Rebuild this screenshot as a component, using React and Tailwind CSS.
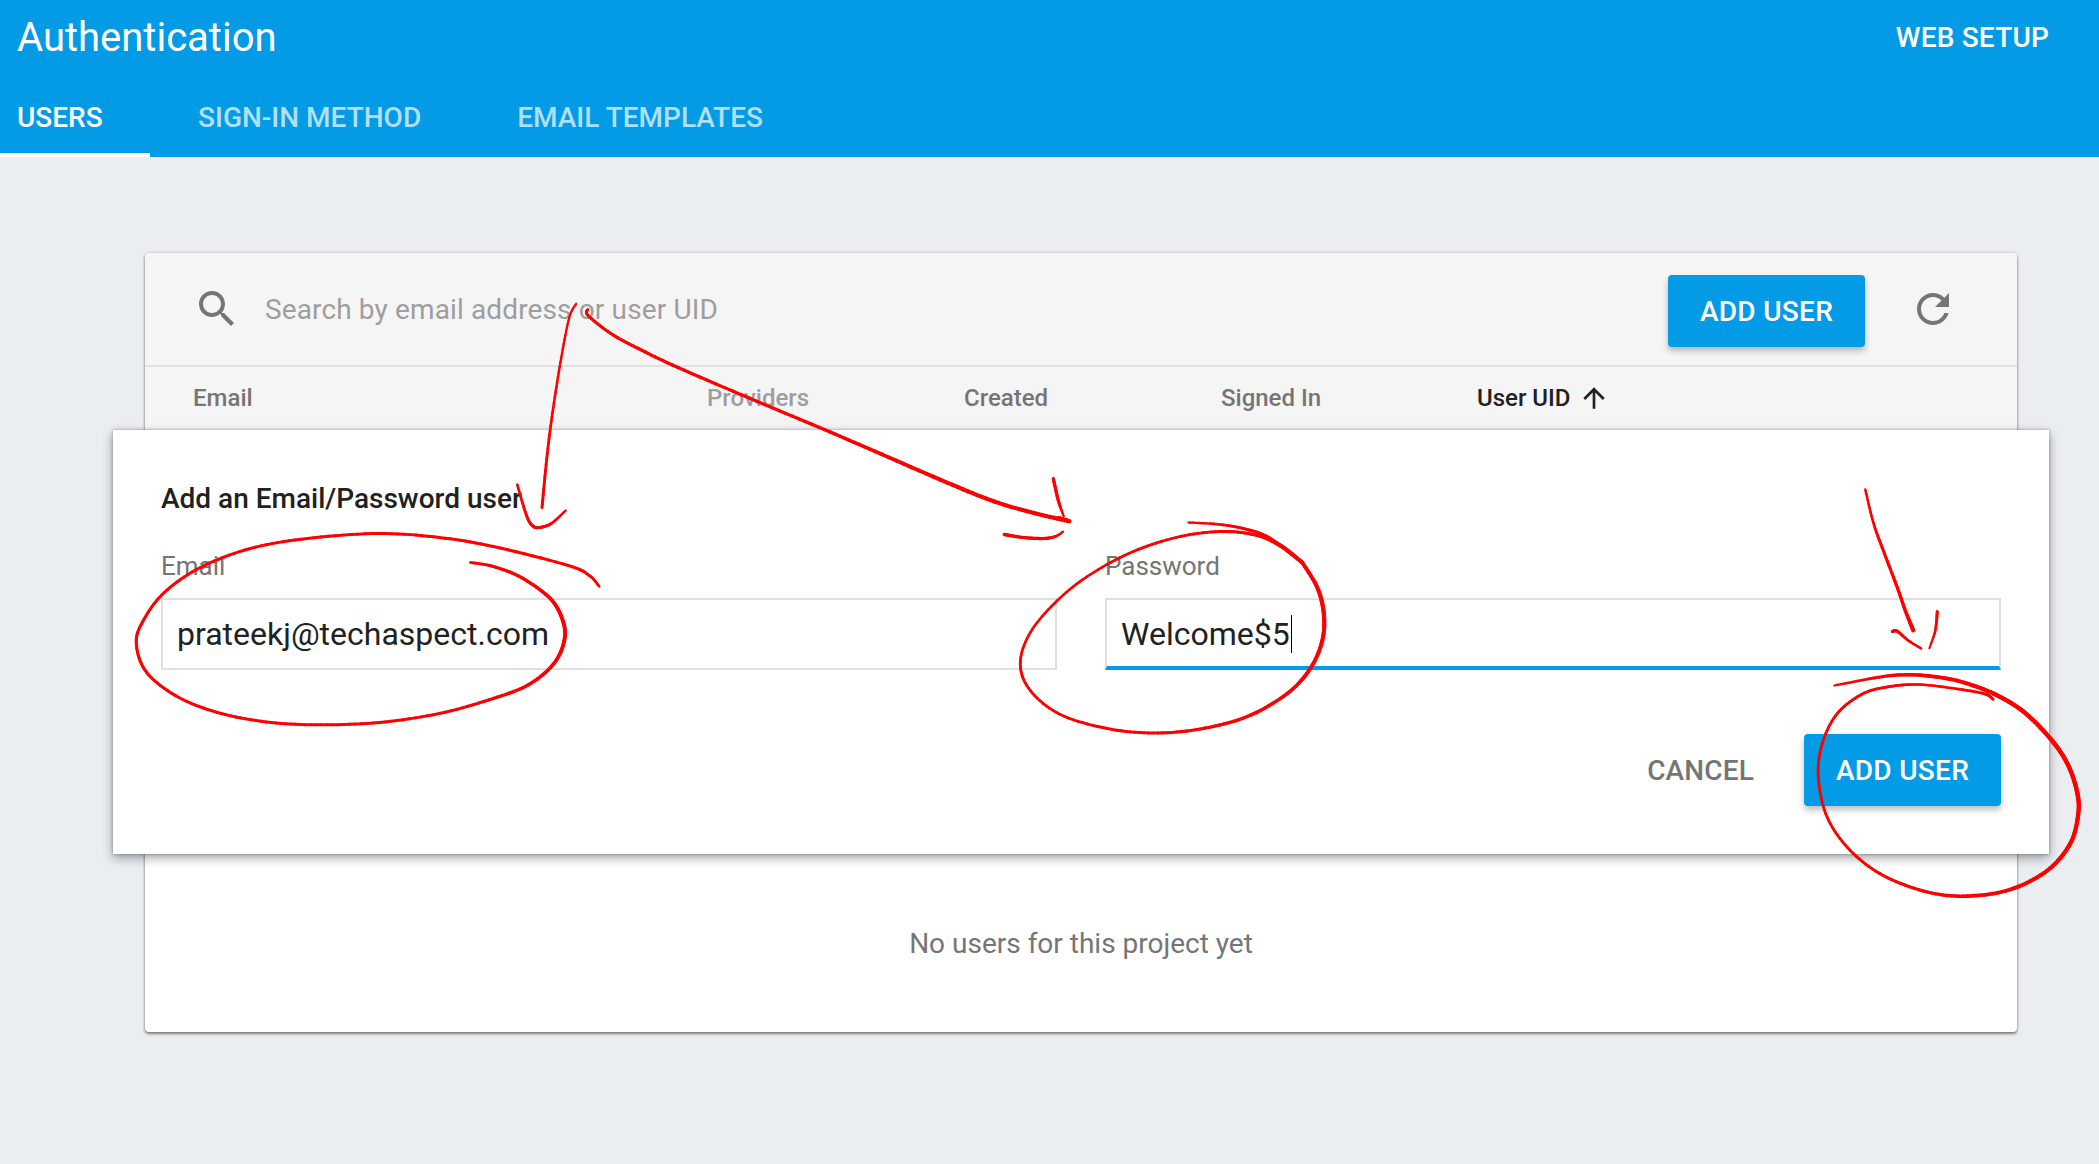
const COLUMNS = [
  { label: 'Email', className: 'w-[514px] text-[#757575]' },
  { label: 'Providers', className: 'w-[257px] text-[#9e9e9e]' },
  { label: 'Created', className: 'w-[257px] text-[#757575]' },
  { label: 'Signed In', className: 'w-[256px] text-[#757575]' },
];

// Pen strokes: each point is [x, y, pen width].
const STROKES = [
  [[576, 303, 2], [569, 317, 2.2], [561, 357, 2.4], [553, 407, 2.6], [547, 453, 2.8], [541.7, 507, 3]],
  [[517, 484, 2.4], [521.5, 500, 2.6], [527.4, 518, 2.8], [532.6, 525.5, 3], [539, 527, 3], [551, 523, 2.8], [565.4, 510, 2.2]],
  [[587.5, 309, 2.6], [587.8, 315, 3], [610.5, 333, 3], [638, 348, 3.2], [677.7, 367, 3.2], [757, 401, 3.2], [824, 429, 3.4], [875, 451, 3.6], [946.6, 482, 4], [994, 501, 4], [1033.6, 512.5, 4], [1069, 520.7, 4.2]],
  [[1053, 478, 3.2], [1058, 500, 3.2], [1063.5, 516, 2]],
  [[1058, 517, 3], [1069, 520.7, 4]],
  [[1004, 534, 3.4], [1023, 537, 3.2], [1043, 538, 3.2], [1055, 536, 2.6], [1063, 531, 2]],
  [[470, 562, 2.6], [493, 566, 3], [521, 577, 3.2], [550, 598, 3.6], [562.5, 620, 3.8], [564, 640, 3.8], [553.6, 663, 3.6], [528.6, 684, 3.4], [493, 698, 3.2], [439, 713, 3], [378.6, 722, 3], [321, 724.3, 3], [271, 722, 3], [221, 713, 3], [178.6, 697, 3], [146.4, 672, 3], [136, 643, 3], [143, 620, 3], [164, 592, 3], [200, 567, 3], [250, 548, 3], [307, 538, 3], [378.6, 533, 3], [439, 537, 3], [493, 546, 3], [568, 565, 3], [589, 575, 2.8], [599, 586, 2.4]],
  [[1188, 522, 2.2], [1220, 524, 2.6], [1247, 529, 3], [1270, 538, 3.2], [1302, 562, 3.4]],
  [[1302, 562, 3.6], [1317, 587, 4], [1323.5, 613, 4.2], [1322, 640, 4], [1310, 668, 3.8], [1287, 693, 3.6], [1247, 716, 3.4], [1200, 728.5, 3.2], [1153, 732.5, 3], [1107, 728, 3], [1060, 714, 2.8], [1030, 690, 2.8], [1020, 663, 2.8], [1030, 632, 2.6], [1057, 600, 2.6], [1090, 574, 2.6], [1133, 551, 2.8], [1180, 536, 2.8], [1223, 531, 3], [1257, 535, 3.2], [1280, 545, 4], [1302, 562, 3.8]],
  [[1865, 489, 2.4], [1873, 522, 2.6], [1883, 550, 3], [1897, 587, 3.2], [1905, 610, 3.4], [1913, 630, 4]],
  [[1892, 631, 3], [1897, 630.8, 3], [1908, 640, 2.6], [1921, 648, 2.2]],
  [[1937, 611, 3], [1935, 630, 2.6], [1929, 648, 1.8]],
  [[1834, 685, 2.2], [1883, 676, 3], [1910, 674.3, 3.4], [1933, 676, 3.6], [1960, 681, 3.8], [1993, 693, 4.2], [2023, 711, 4.4], [2050, 738, 4.4], [2067, 763, 4.4], [2076.5, 790, 4.4], [2078, 813, 4.2], [2070, 843, 4.2], [2047, 870, 4], [2010, 889, 3.8], [1967, 895.6, 3.6], [1927, 891.5, 3.2], [1883, 875, 3], [1850, 850, 2.8], [1827, 817, 2.8], [1818, 777, 2.8], [1822, 743, 2.8], [1837, 713, 2.8], [1863, 693, 2.8], [1890, 686, 2.8], [1917, 684, 2.6], [1947, 687, 2.6], [1983, 693, 2.8], [1993, 699, 2.6]],
];

// Splits a stroke into short Catmull-Rom pieces so the pen width can vary.
function smooth(points) {
  const out = [];
  const steps = 10;
  for (let i = 0; i < points.length - 1; i++) {
    const p0 = points[Math.max(i - 1, 0)];
    const p1 = points[i];
    const p2 = points[i + 1];
    const p3 = points[Math.min(i + 2, points.length - 1)];
    for (let s = 0; s < steps; s++) {
      const t = s / steps;
      out.push(
        [0, 1, 2].map(
          (k) =>
            0.5 *
            (2 * p1[k] +
              (p2[k] - p0[k]) * t +
              (2 * p0[k] - 5 * p1[k] + 4 * p2[k] - p3[k]) * t * t +
              (3 * p1[k] - p0[k] - 3 * p2[k] + p3[k]) * t * t * t)
        )
      );
    }
  }
  out.push(points[points.length - 1]);
  return out;
}

function Ink() {
  return (
    <svg
      className="pointer-events-none absolute left-0 top-0 z-20"
      width="2099"
      height="1164"
      viewBox="0 0 2099 1164"
      fill="none"
      stroke="#ff0000"
      strokeLinecap="round"
    >
      <g transform="translate(0.3 0.5)">
        {STROKES.map((stroke, n) => {
          const pts = smooth(stroke);
          return (
            <g key={n}>
              {pts.slice(1).map((p, i) => (
                <line key={i} x1={pts[i][0]} y1={pts[i][1]} x2={p[0]} y2={p[1]} strokeWidth={p[2]} />
              ))}
            </g>
          );
        })}
      </g>
    </svg>
  );
}

function Icon({ d, className }) {
  return (
    <svg viewBox="0 0 24 24" fill="currentColor" className={className}>
      <path d={d} />
    </svg>
  );
}

const SEARCH =
  'M15.5 14h-.79l-.28-.27C15.41 12.59 16 11.11 16 9.5 16 5.91 13.09 3 9.5 3S3 5.91 3 9.5 5.91 16 9.5 16c1.61 0 3.09-.59 4.23-1.57l.27.28v.79l5 4.99L20.49 19l-4.99-5zm-6 0C7.01 14 5 11.99 5 9.5S7.01 5 9.5 5 14 7.01 14 9.5 11.99 14 9.5 14z';
const REFRESH =
  'M17.65 6.35C16.2 4.9 14.21 4 12 4c-4.42 0-7.99 3.58-7.99 8s3.57 8 7.99 8c3.73 0 6.84-2.55 7.73-6h-2.08c-.82 2.33-3.04 4-5.65 4-3.31 0-6-2.69-6-6s2.69-6 6-6c1.66 0 3.14.69 4.22 1.78L13 11h7V4l-2.35 2.35z';
const ARROW_UP = 'M4 12l1.41 1.41L11 7.83V20h2V7.83l5.58 5.59L20 12l-8-8-8 8z';

function PrimaryButton({ children }) {
  return (
    <button className="flex h-[72px] w-[197px] shrink-0 items-center justify-center rounded-[4px] bg-[#039be5] pt-[2px] text-[28px] font-medium tracking-[0.3px] text-white shadow-[0_4px_6px_rgba(0,0,0,0.26)]">
      {children}
    </button>
  );
}

export default function App() {
  return (
    <div className="relative h-[1164px] w-[2099px] overflow-hidden bg-[#eaeef1] font-[Roboto,sans-serif]">
      <header className="flex h-[157px] flex-col justify-between bg-[#039be5] text-white">
        <div className="flex h-[76px] items-center justify-between pl-[17px] pr-[50px]">
          <h1 className="text-[40px] leading-[48px]">Authentication</h1>
          <button className="text-[28px] font-medium leading-8 tracking-[0.2px]">WEB SETUP</button>
        </div>
        <nav className="flex h-[80px] text-[28px] font-medium">
          <a className="flex h-full w-[150px] items-center border-b-4 border-white pl-[17px] pt-[6px]">USERS</a>
          <a className="flex h-full items-center border-b-4 border-transparent px-12 pt-[6px] text-white/70">
            SIGN-IN METHOD
          </a>
          <a className="flex h-full items-center border-b-4 border-transparent px-12 pt-[6px] text-white/70">
            EMAIL TEMPLATES
          </a>
        </nav>
      </header>

      <main className="ml-[145px] mt-24 h-[779px] w-[1872px] rounded-[4px] bg-white shadow-[0_2px_3px_rgba(0,0,0,0.45),0_0_3px_rgba(0,0,0,0.2)]">
        <div className="flex h-[114px] items-center rounded-t-[4px] border-b-2 border-[#e0e0e0] bg-[#f5f5f5] pl-12 pr-[60px]">
          <Icon d={SEARCH} className="size-12 text-[#757575]" />
          <span className="ml-6 flex-1 pt-[2px] text-[28px] tracking-[0.13px] text-[#9e9e9e]">
            Search by email address or user UID
          </span>
          <div className="mt-1">
            <PrimaryButton>ADD USER</PrimaryButton>
          </div>
          <Icon d={REFRESH} className="ml-11 size-12 text-[#757575]" />
        </div>

        <div className="flex h-[63px] items-center bg-[#f5f5f5] pb-[2px] pl-12 text-[24px] font-medium">
          {COLUMNS.map((c) => (
            <span key={c.label} className={c.className}>
              {c.label}
            </span>
          ))}
          <span className="flex items-center gap-[7px] text-[#212121]">
            User UID
            <Icon d={ARROW_UP} className="size-8" />
          </span>
        </div>

        <section className="relative z-10 -ml-8 flex h-[424px] w-[1936px] flex-col bg-white px-12 pb-12 pt-[51px] shadow-[0_4px_10px_rgba(0,0,0,0.36),0_0_3px_rgba(0,0,0,0.3)]">
          <h2 className="text-[28px] font-medium leading-9 text-[#212121]">Add an Email/Password user</h2>
          <div className="mt-[33px] grid grid-cols-2 gap-12">
            <label className="flex flex-col">
              <span className="text-[26px] leading-8 text-[#757575]">Email</span>
              <span className="mt-4 flex h-[72px] items-center border-2 border-[#e0e0e0] pl-[14px] text-[32px] text-[#212121]">
                prateekj@techaspect.com
              </span>
            </label>
            <label className="flex flex-col">
              <span className="text-[26px] leading-8 text-[#757575]">Password</span>
              <span className="mt-4 flex h-[72px] items-center border-2 border-b-4 border-[#e0e0e0] border-b-[#039be5] pl-[14px] pt-[2px] text-[32px] text-[#212121]">
                Welcome$5
                <span className="ml-px h-[38px] w-px bg-black" />
              </span>
            </label>
          </div>
          <div className="mt-auto flex items-center justify-end">
            <button className="mr-[50px] pt-[2px] text-[28px] font-medium tracking-[0.15px] text-[#757575]">
              CANCEL
            </button>
            <PrimaryButton>ADD USER</PrimaryButton>
          </div>
        </section>

        <div className="flex h-[178px] items-center justify-center pt-[2px] text-[28px] text-[#757575]">
          No users for this project yet
        </div>
      </main>
      <Ink />
    </div>
  );
}
